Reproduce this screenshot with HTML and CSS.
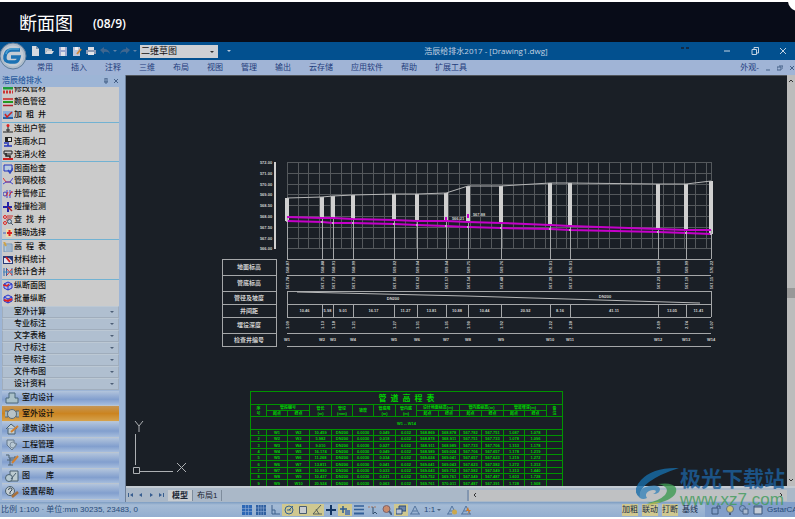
FILE: index.html
```
<!DOCTYPE html>
<html lang="zh-CN">
<head>

	<!-- Page title -->
	<title>断面图</title>

	<!-- Meta tags -->
	<meta charset="UTF-8">
	<meta name="viewport" content="width=device-width, initial-scale=1.0">

	<!-- Style -->
	<link rel="stylesheet" href="styles.css">

</head>
<body>

<!-- Caption -->
<header class="caption">
	<h1>断面图</h1>
	<span>(08/9)</span>
	<i class="corner"></i>
</header>

<main class="app">

	<!-- Title bar -->
	<div class="titlebar">
		<button class="logo" aria-label="菜单">
			<svg width="28" height="28" viewBox="0 0 28 28">
				<circle cx="14" cy="14" r="13" fill="#aebccb" stroke="#5f7d9b"/>
				<circle cx="14" cy="14" r="10.500" fill="#c3ccd5"/>
				<path d="M21 8h-8q-6 0-7 6t5 6h5q3 0 4-5h-8" fill="none" stroke="#1b72b4" stroke-width="3.500"/>
				<path d="M20 7h-7q-5 0-6 5" fill="none" stroke="#4aa0d4" stroke-width="1.500"/>
			</svg>
		</button>
		<div class="quick">
			<button aria-label="新建"><svg viewBox="0 0 10 10"><path d="M2 0h4l3 3v7H2z" fill="#d5dae0"/><path d="M6 0v3h3" fill="#8899ad"/></svg></button>
			<button aria-label="打开"><svg viewBox="0 0 10 10"><path d="M1 2h3l1 1h3v2H3L1 8z" fill="#b8bfc8"/><path d="M3 5h7L8 8H1z" fill="#d5d9de"/></svg></button>
			<button aria-label="保存"><svg viewBox="0 0 10 10"><path d="M1 1h8v9H1z" fill="#9ea9d1"/><path d="M3 1h4v3H3zM3 6h4v4H3z" fill="#e0e2e8"/></svg></button>
			<button aria-label="另存为"><svg viewBox="0 0 10 10"><path d="M1 1h7v9H1z" fill="#bcc5dc"/><path d="M3 1h3v3H3z" fill="#eee"/><path d="M9 3L5 8" stroke="#d08a3c" stroke-width="2"/></svg></button>
			<button aria-label="打印"><svg viewBox="0 0 10 10"><path d="M2 1h6v3H2z" fill="#d8dce2"/><path d="M0 4h10v4H0z" fill="#8e9bb5"/><path d="M2 6h6v3H2z" fill="#e3e5ea"/></svg></button>
			<button aria-label="放弃"><svg viewBox="0 0 10 10"><path d="M0 4l4-3v2q5 0 6 5-2-3-6-2v2z" fill="#3f668f"/></svg></button>
			<i class="caret"></i>
			<button aria-label="重做"><svg viewBox="0 0 10 10"><path d="M10 4L6 1v2q-5 0-6 5 2-3 6-2v2z" fill="#3f668f"/></svg></button>
			<i class="caret"></i>
		</div>
		<div class="workspace">
			<select aria-label="工作空间"><option>二维草图</option></select>
		</div>
		<i class="caret light"></i>
		<h2>浩辰给排水2017 - [Drawing1.dwg]</h2>
		<div class="window">
			<svg class="dots" viewBox="0 0 8 4"><path d="M0 2h3M5 2h3"/></svg>
			<button aria-label="最小化"><svg viewBox="0 0 8 8"><path d="M1 4h6"/></svg></button>
			<button aria-label="还原"><svg viewBox="0 0 8 8"><path d="M1 2.500h4.500v5H1zM3 2V.5h4.500V6H6"/></svg></button>
			<button aria-label="关闭"><svg viewBox="0 0 8 8"><path d="M1 1l6 6M7 1L1 7"/></svg></button>
		</div>
	</div>

	<!-- Menu -->
	<nav class="menu">
		<a href="#">常用</a>
		<a href="#">插入</a>
		<a href="#">注释</a>
		<a href="#">三维</a>
		<a href="#">布局</a>
		<a href="#">视图</a>
		<a href="#">管理</a>
		<a href="#">输出</a>
		<a href="#">云存储</a>
		<a href="#">应用软件</a>
		<a href="#">帮助</a>
		<a href="#">扩展工具</a>
		<div class="child">
			<a href="#">外观-</a>
			<button aria-label="最小化"><svg viewBox="0 0 6 6"><path d="M1 5h4"/></svg></button>
			<button aria-label="还原"><svg viewBox="0 0 6 6"><path d="M0 2h4v3H0zM2 1h4v3"/></svg></button>
			<button aria-label="关闭"><svg viewBox="0 0 6 6"><path d="M1 1l4 4M5 1L1 5"/></svg></button>
		</div>
	</nav>

	<div class="work">

		<!-- Tool panel -->
		<aside class="panel">
			<div class="panel-title">
				<span>浩辰给排水</span>
				<button aria-label="固定"><svg viewBox="0 0 6 6"><path d="M2 0v4M4 0v4M1 4h4M3 4v2M2 0h2"/></svg></button>
				<button aria-label="关闭"><svg viewBox="0 0 6 6"><path d="M1 1l4 4M5 1L1 5"/></svg></button>
			</div>

			<div class="tools">
				<button class="cut"><svg viewBox="0 0 10 10"><path d="M0 4h10" stroke="#1d9b3a" stroke-width="3"/><path d="M0 8h10" stroke="#c33" stroke-width="3" stroke-dasharray="2 1"/></svg>修改管材</button>
				<button><svg viewBox="0 0 10 10"><path d="M0 2h10" stroke="#c22" stroke-width="1.500"/><path d="M0 5h10" stroke="#292" stroke-width="2"/><path d="M0 8.500h10" stroke="#b02030" stroke-width="1.500"/></svg>颜色管径</button>
				<button><svg viewBox="0 0 10 10"><path d="M0 1h10v8H0z" fill="#8cafd8"/><path d="M0 8h10" stroke="#2963a8" stroke-width="2"/><path d="M2 4l2 3 5-5" fill="none" stroke="#c22" stroke-width="1.500"/></svg>加&ensp;粗&ensp;井</button>
				<hr>
				<button><svg viewBox="0 0 10 10"><path d="M0 8h10M5 8V2M3 6h4" fill="none" stroke="#222"/><circle cx="5" cy="1.500" r="1.500" fill="#d22"/></svg>连出户管</button>
				<button><svg viewBox="0 0 10 10"><path d="M2 0h7v5H2z" fill="#222"/><path d="M5 1h3v3H5z" fill="#ddd"/><path d="M5 5v4M1 9h8M1 6h3" stroke="#23b" stroke-width="1.500"/></svg>连雨水口</button>
				<button><svg viewBox="0 0 10 10"><path d="M1 1h8v3H1z" fill="none" stroke="#222"/><path d="M3 3v3h4v2" fill="none" stroke="#222" stroke-width="1.500"/><path d="M0 9h10" stroke="#c22" stroke-width="2"/></svg>连消火栓</button>
				<hr>
				<button><svg viewBox="0 0 10 10"><path d="M1 1h8v6H1z" fill="#b8cae0" stroke="#23b"/><path d="M5 6l2 3 3-5" fill="none" stroke="#3348c0" stroke-width="1.500"/></svg>图面检查</button>
				<button><svg viewBox="0 0 10 10"><path d="M0 2l3 4h4" fill="none" stroke="#d33"/><path d="M0 8l3-2h4l3-4M7 6l3 2" fill="none" stroke="#44c"/></svg>管网校核</button>
				<button><svg viewBox="0 0 10 10"><circle cx="2" cy="5" r="2" fill="none" stroke="#44b"/><path d="M4 1v8M7 1v8M7 4l3-1" stroke="#44c"/><path d="M5 3l-2 4M9 2L6 7" stroke="#d33"/></svg>井管修正</button>
				<button><svg viewBox="0 0 10 10"><path d="M0 5h9M5 0v10" stroke="#22a" stroke-width="2"/><path d="M5 5l4 4" stroke="#a22" stroke-width="1.500"/></svg>碰撞检测</button>
				<button><svg viewBox="0 0 10 10"><circle cx="2" cy="2" r="1.500" fill="none" stroke="#d22"/><circle cx="2" cy="8" r="1.500" fill="none" stroke="#d22"/><path d="M4 1h6M4 3h5M3 5h4" stroke="#c33"/><circle cx="6.500" cy="6.500" r="2" fill="#bcd" stroke="#456"/><path d="M8 8l2 2" stroke="#456"/></svg>查&ensp;找&ensp;井</button>
				<button><svg viewBox="0 0 10 10"><path d="M3 1h6v8H3z" fill="#eadba9"/><path d="M4 5h5M6.500 2v6" stroke="#d22" stroke-width="2"/><path d="M0 5h3" stroke="#46b"/></svg>辅助选择</button>
				<hr>
				<button><svg viewBox="0 0 10 10"><path d="M1 2h8v8H1z" fill="#b5cadc" stroke="#7393b4"/><path d="M3 4h5M3 6h5M3 8h5" stroke="#8aa2bd"/><path d="M1 0l2 4" stroke="#cda34b" stroke-width="2"/></svg>高&ensp;程&ensp;表</button>
				<button><svg viewBox="0 0 10 10"><path d="M0 1h10v8H0z" fill="#273a78"/><path d="M1 3h5l3 3v2H1z" fill="#e3e3ef"/><path d="M3 2l4 5" stroke="#c22" stroke-width="2"/></svg>材料统计</button>
				<button><svg viewBox="0 0 10 10"><path d="M1 1v8M3.500 1v8M9 1v8" stroke="#36a"/><path d="M4 2l5 6M9 2L4 8" stroke="#d33"/><path d="M0 5h10" stroke="#48b"/></svg>统计合并</button>
				<hr>
				<button><svg viewBox="0 0 10 10"><path d="M1 3l4-2 4 2v4L5 9 1 7zM1 3l4 2 4-2M5 5v4" fill="#b7b7e6" stroke="#23c"/><path d="M0 4l4 1 2-2" fill="none" stroke="#d22" stroke-width="1.500"/></svg>纵断面图</button>
				<button><svg viewBox="0 0 10 10"><path d="M1 3l4-2 4 2v4L5 9 1 7zM1 3l4 2 4-2M5 5v4" fill="#b7b7e6" stroke="#23c"/><path d="M1 6l4 1 4-2" fill="none" stroke="#d22" stroke-width="2"/></svg>批量纵断</button>
			</div>

			<div class="groups">
				<button>室外计算<i class="caret"></i></button>
				<button>专业标注<i class="caret"></i></button>
				<button>文字表格<i class="caret"></i></button>
				<button>尺寸标注<i class="caret"></i></button>
				<button>符号标注<i class="caret"></i></button>
				<button>文件布图<i class="caret"></i></button>
				<button>设计资料<i class="caret"></i></button>
			</div>

			<div class="modules">
				<button><svg viewBox="0 0 14 12"><path d="M4 1h6v5h3v5H1V6h3z" fill="#a9c0c8" stroke="#4a6678"/></svg>室内设计</button>
				<button class="active"><svg viewBox="0 0 14 12"><path d="M0 3h3v6H0M14 3h-3v6h3" fill="#9fb0b4" stroke="#5a6b78"/><circle cx="7" cy="6" r="4.500" fill="#b8c3c6" stroke="#5a6b78"/></svg>室外设计</button>
				<button><svg viewBox="0 0 14 12"><path d="M1 6l5-5 6 5M3 5v6h7V5" fill="#c2cccf" stroke="#4a6070"/><path d="M6 9l7-6" stroke="#d08030" stroke-width="2"/></svg>建筑设计</button>
				<button><svg viewBox="0 0 14 12"><path d="M2 1h7v3l3 1-5 6-5-5z" fill="#b8c8d4" stroke="#64788c"/><circle cx="8" cy="6" r="3" fill="none" stroke="#8090a0"/></svg>工程管理</button>
				<button><svg viewBox="0 0 14 12"><path d="M1 1h3v3h6V2M2 6h8M5 4v7M3 11h5" fill="none" stroke="#4f6370"/><path d="M7 9l6-7" stroke="#d08030" stroke-width="2"/></svg>通用工具</button>
				<button><svg viewBox="0 0 14 12"><path d="M5 1h8v10H5z" fill="#bccbd0" stroke="#4a6070"/><circle cx="4" cy="8" r="3.500" fill="#b6c9d2" stroke="#4a6070"/><path d="M6 9l5-6" stroke="#4a6070"/></svg>图&emsp;&emsp;库</button>
				<button><svg viewBox="0 0 14 12"><circle cx="5" cy="5" r="4.500" fill="#c5ced2" stroke="#4a6070"/><path d="M3.500 4q0-2 2-2t1.500 2L5 6v2" fill="none" stroke="#384858"/><path d="M7 11l6-5" stroke="#a86f38" stroke-width="2.500"/></svg>设置帮助</button>
			</div>
		</aside>

		<section class="view">

			<!-- Drawing -->
			<div class="canvas">
				<svg id="profile" width="504" height="196" viewBox="216 156 504 196"></svg>

				<table class="elevations">
					<colgroup>
						<col class="narrow"><col class="mid"><col><col><col class="mid"><col class="mid"><col><col class="mid">
						<col><col class="mid"><col><col><col class="mid"><col><col class="narrow">
					</colgroup>
					<thead>
						<tr class="title"><th colspan="15">管&ensp;道&ensp;高&ensp;程&ensp;表</th></tr>
						<tr>
							<th rowspan="2">序<br>号</th>
							<th colspan="2">管段编号</th>
							<th rowspan="2">管长<br>(m)</th>
							<th rowspan="2">管径<br>(mm)</th>
							<th rowspan="2">坡度</th>
							<th rowspan="2">管底降<br>(m)</th>
							<th rowspan="2">管内底<br>(m)</th>
							<th colspan="2">设计地面标高(m)</th>
							<th colspan="2">管内底标高(m)</th>
							<th colspan="2">管道埋深(m)</th>
							<th rowspan="2">备<br>注</th>
						</tr>
						<tr>
							<th>起点</th><th>终点</th><th>起点</th><th>终点</th><th>起点</th><th>终点</th><th>起点</th><th>终点</th>
						</tr>
						<tr class="range"><td colspan="15">W1 -- W14</td></tr>
					</thead>
					<tbody id="rows"></tbody>
				</table>

				<svg class="ucs" width="56" height="58" viewBox="0 0 56 58">
					<path d="M3.500 45V14M7 51.500h34M1.500 47.500h6v6h-6z"/>
					<path d="M3 1l4 5 4-5M7 6v6M45 43l9 9M54 43l-9 9"/>
				</svg>
			</div>

			<!-- Vertical scroll -->
			<div class="vscroll">
				<button aria-label="向上"><svg viewBox="0 0 6 6"><path d="M1 4l2-2 2 2"/></svg></button>
				<i></i>
				<button aria-label="向下"><svg viewBox="0 0 6 6"><path d="M1 2l2 2 2-2"/></svg></button>
			</div>

			<!-- Layout tabs -->
			<div class="tabs">
				<button class="step" aria-label="第一个"><svg viewBox="0 0 6 6"><path d="M0 1h1v4H0zM5 1v4L2 3z"/></svg></button>
				<button class="step" aria-label="上一个"><svg viewBox="0 0 6 6"><path d="M4 1v4L1 3z"/></svg></button>
				<button class="step" aria-label="下一个"><svg viewBox="0 0 6 6"><path d="M2 1v4l3-2z"/></svg></button>
				<button class="step" aria-label="最后一个"><svg viewBox="0 0 6 6"><path d="M1 1v4l3-2zM5 1h1v4H5z"/></svg></button>
				<button class="tab active">模型</button>
				<button class="tab">布局1</button>
				<div class="hscroll">
					<button aria-label="向左"><svg viewBox="0 0 6 6"><path d="M4 1L2 3l2 2"/></svg></button>
					<button aria-label="向右"><svg viewBox="0 0 6 6"><path d="M2 1l2 2-2 2"/></svg></button>
				</div>
			</div>
		</section>
	</div>

	<!-- Status bar -->
	<footer class="status">
		<div class="coords">比例 1:100 · 单位:mm 30235, 23483, 0</div>
		<div class="modes">
			<button aria-label="捕捉"><svg viewBox="0 0 10 10"><path d="M0 0h10v10H0z" fill="#2d67b5"/><path d="M3.500 0v10M6.500 0v10M0 3.500h10M0 6.500h10" stroke="#8caad4" stroke-width=".6"/></svg></button>
			<button aria-label="栅格"><svg viewBox="0 0 10 10"><path d="M0 0h10v10H0z" fill="#2f5f9f"/><path d="M2.500 0v10M5 0v10M7.500 0v10M0 3h10M0 6.500h10" stroke="#8caad4" stroke-width=".6"/></svg></button>
			<button aria-label="正交"><svg viewBox="0 0 10 10"><path d="M2 0v9h8M2 5h3v4" fill="none" stroke="#3f618c"/></svg></button>
			<button class="on" aria-label="极轴"><svg viewBox="0 0 10 10"><circle cx="5" cy="5" r="4" fill="none" stroke="#35618f"/><path d="M5 5l4-4M3 5h4" stroke="#35618f"/></svg></button>
			<button class="on" aria-label="对象捕捉"><svg viewBox="0 0 10 10"><path d="M1.500 1.500h7v7h-7z" fill="#c8ccd0" stroke="#4a5c70"/></svg></button>
			<button class="on" aria-label="追踪"><svg viewBox="0 0 10 10"><path d="M9 0L1 9h9M4 4l3 5" fill="none" stroke="#57605a"/></svg></button>
			<button aria-label="动态"><svg viewBox="0 0 10 10"><path d="M0 5h10M5 0v10" stroke="#123462" stroke-width="2"/></svg></button>
			<button class="on" aria-label="输入"><svg viewBox="0 0 10 10"><path d="M0 4h7M3 1v7" stroke="#2d5b92" stroke-width="1.500"/><path d="M5 5h5v5H5z" fill="#6280aa"/></svg></button>
			<button aria-label="线宽"><svg viewBox="0 0 10 10"><path d="M0 1h10M0 4.500h10" stroke="#335f98" stroke-width="1.500"/><path d="M0 8.500h10" stroke="#335f98" stroke-width="2"/></svg></button>
			<button aria-label="选择"><svg viewBox="0 0 10 10"><path d="M0 2h8" stroke="#a67865" stroke-dasharray="2 1"/><path d="M5 2v7l2-2 2 2" fill="none" stroke="#34506f"/></svg></button>
			<button aria-label="缩放"><svg viewBox="0 0 10 10"><circle cx="4.500" cy="4" r="3.500" fill="#c98a6c" stroke="#7f6268"/><path d="M7 6l3 4" stroke="#49617e" stroke-width="2"/></svg></button>
			<button class="on" aria-label="图层"><svg viewBox="0 0 10 10"><path d="M3 1h7v5H3z" fill="#6d86a9" stroke="#2c4a78"/><path d="M0 4h6v5H0z" fill="#b9c4d4" stroke="#2c4a78"/></svg></button>
			<button aria-label="注释比例"><svg viewBox="0 0 10 10"><path d="M1 9l4-8 4 8M0 9h10M3 6h4" fill="none" stroke="#54759e"/></svg></button>
			<button class="scale">1:1<i class="caret"></i></button>
			<button aria-label="注释可见性"><svg viewBox="0 0 10 10"><path d="M1 9l4-8 4 8M0 9h5M3 6h3" fill="none" stroke="#54759e"/><circle cx="7.500" cy="7" r="2.500" fill="#cba84d"/></svg></button>
			<button aria-label="自动缩放"><svg viewBox="0 0 10 10"><path d="M1 9l4-8 4 8M0 9h10M3 6h3" fill="none" stroke="#54759e"/><path d="M7 2L5 6h3l-2 4 4-5H8z" fill="#d27a25"/></svg></button>
		</div>
		<div class="flags">
			<button class="on">加粗</button>
			<button class="on">联动</button>
			<button class="on">打断</button>
			<button>基线</button>
		</div>
		<div class="tray">
			<button aria-label="锁定"><svg viewBox="0 0 10 10"><path d="M1 3h6v6H1zM6 3V1h3v3" fill="none" stroke="#3c587d"/></svg></button>
			<button aria-label="提示"><svg viewBox="0 0 10 10"><circle cx="5" cy="4" r="3.500" fill="#d0c475" stroke="#5d728c"/><path d="M4 8h2v2H4z" fill="#455b78"/></svg></button>
			<button aria-label="隔离"><svg viewBox="0 0 10 10"><circle cx="3.500" cy="3.500" r="3" fill="none" stroke="#4a6488"/><path d="M4 4h5v5H4z" fill="#a9b9cf" stroke="#4a6488"/></svg></button>
			<button aria-label="全屏"><svg viewBox="0 0 10 10"><path d="M1 1h8v8H1z" fill="#c4ccd6" stroke="#3c587d"/><path d="M1 2h8" stroke="#3c587d"/></svg></button>
			<span>GstarCAD</span>
		</div>
	</footer>

	<!-- Site mark -->
	<div class="mark">
		<svg width="44" height="40" viewBox="0 0 44 40">
			<path d="M43 1Q17 0 5 13-5 24 4 31q-1-9 9-16Q24 7 43 1z" fill="#176da9"/>
			<path d="M4 31Q2 21 13 19q10-2 11 3 0 5-7 5 3-1 3-3-2-2-7 0-5 3-2 7-4 2-7 0z" fill="#3a86bb"/>
			<path d="M22 17q15-2 18 4 2 8-11 13-9 4-18 2 12-2 18-8 6-8-7-11z" fill="#3f9b53"/>
			<path d="M10 38q9-4 15-3l-6 2z" fill="#a9b53c"/>
		</svg>
		<div>
			<strong>极光下载站</strong>
			<span>www.xz7.com</span>
		</div>
	</div>
</main>

<script src="script.js"></script>
</body>
</html>
```

FILE: styles.css
```
* {
	box-sizing: border-box;
}

html,
body {
	height: 100%;
	margin: 0;
}

body {
	background: #fff;
	display: flex;
	flex-direction: column;
	padding: 2px 0;
	font-family: 'Liberation Sans', 'Noto Sans CJK SC', sans-serif;
	font-size: 8px;
	line-height: 12px;
	overflow: hidden;
}

button {
	background: transparent;
	border: none;
	margin: 0;
	padding: 0;
	color: inherit;
	font: inherit;
	cursor: pointer;
}

a {
	color: inherit;
	text-decoration: none;
}

svg {
	display: block;
	flex: none;
}

.caret {
	border: 2px solid transparent;
	border-top-color: #4d5f76;
	border-bottom: none;
	width: 4px;
	height: 2px;
}

/* Caption */

.caption {
	background: #080c18;
	color: #fff;
	display: flex;
	align-items: center;
	gap: 20px;
	height: 40px;
	flex: none;
	padding: 2px 19px 0;
	position: relative;
	overflow: hidden;
	font-family: 'Open Sans', 'Noto Sans CJK SC', sans-serif;
	font-size: 12px;
}

.caption h1 {
	font-size: 18px;
	font-weight: 400;
	line-height: 24px;
	margin: 0;
}

.caption span {
	font-weight: 600;
	padding-top: 2px;
}

.corner {
	background: #fff;
	border-radius: 50%;
	width: 20px;
	height: 20px;
	position: absolute;
	top: -11px;
	right: -13px;
}

/* Window */

.app {
	display: flex;
	flex-direction: column;
	flex: 1;
	min-height: 0;
	position: relative;
	overflow: hidden;
}

.titlebar {
	background: #02508f;
	display: flex;
	align-items: center;
	height: 18px;
	flex: none;
	padding-left: 30px;
	color: #c3d3e3;
}

.logo {
	position: absolute;
	top: 0;
	left: -1px;
	z-index: 1;
}

.quick {
	display: flex;
	align-items: center;
	gap: 4px;
}

.quick svg {
	width: 10px;
	height: 10px;
}

.quick .caret {
	border-top-color: #5d82a8;
	margin: 0 -1px;
}

.workspace {
	position: relative;
	margin: 0 9px 0 4px;
}

.workspace::after {
	content: '';
	border: 2px solid transparent;
	border-top-color: #333;
	border-bottom: none;
	position: absolute;
	top: 6px;
	right: 4px;
}

.workspace select {
	appearance: none;
	background: #cdd0d4;
	border: none;
	border-radius: 0;
	color: #111;
	width: 78px;
	height: 13px;
	padding: 0 1px;
	font: 9px/13px 'Liberation Sans', 'Noto Sans CJK SC', sans-serif;
	display: block;
}

.caret.light {
	border-top-color: #b4c6d9;
}

.titlebar h2 {
	flex: 1;
	margin: 0;
	padding-left: 60px;
	text-align: center;
	font: 8px/12px 'Open Sans', 'Noto Sans CJK SC', sans-serif;
	white-space: nowrap;
}

.window {
	display: flex;
	align-items: center;
	gap: 20px;
	padding-right: 8px;
}

.window svg {
	width: 8px;
	height: 8px;
	fill: none;
	stroke: #c3d3e3;
}

.window .dots {
	height: 4px;
	margin: -6px 14px 0 0;
	stroke: #122b47;
	stroke-width: 2;
}

.menu {
	background: #a0b4d6;
	color: #1f3c7c;
	display: flex;
	align-items: center;
	gap: 18px;
	height: 15px;
	flex: none;
	padding-left: 37px;
	white-space: nowrap;
}

.child {
	display: flex;
	align-items: center;
	gap: 6px;
	margin-left: auto;
}

.child svg,
.panel-title svg {
	width: 6px;
	height: 6px;
	fill: none;
	stroke: #456087;
}

.work {
	display: flex;
	flex: 1;
	min-height: 0;
}

/* Tool panel */

.panel {
	background: #9db5d6;
	border-right: 1px solid #6c7f99;
	color: #111;
	display: flex;
	flex-direction: column;
	width: 126px;
	flex: none;
	padding: 0 6px 2px 2px;
	font-weight: 500;
}

.panel-title {
	color: #2c5c9e;
	display: flex;
	align-items: center;
	gap: 4px;
	height: 12px;
	flex: none;
}

.panel-title span {
	flex: 1;
}

.tools,
.modules {
	display: flex;
	flex-direction: column;
	flex: 1 1 0;
	min-height: 0;
	overflow: hidden;
}

.tools {
	background: #cbcbcb;
	flex-grow: 2;
}

.tools button,
.modules button {
	display: flex;
	align-items: center;
	gap: 1px;
	flex: 1 1 0;
	min-height: 0;
	padding-left: 1px;
}

.tools .cut {
	margin-top: -4px;
}

.tools svg {
	width: 10px;
	height: 10px;
}

.tools hr {
	background: #72b2d2;
	border: none;
	width: 100%;
	height: 1px;
	margin: 0;
}

.groups {
	display: flex;
	flex-direction: column;
	flex: none;
	margin-bottom: 1px;
}

.groups button {
	background: #b0bfd0;
	border: 1px solid #a0adbc;
	border-top-color: #bcc8d4;
	display: flex;
	align-items: center;
	justify-content: space-between;
	height: 12px;
	padding: 0 4px 0 11px;
	line-height: 10px;
}

.modules button {
	background: linear-gradient(#b2c4dc, #829fce 60%, #a6bddd);
	border-bottom: 1px solid #bac5d1;
	gap: 3px;
	padding-left: 3px;
}

.modules .active {
	background: linear-gradient(#c59655, #cb8420 50%, #d5a24d);
}

.modules svg {
	width: 14px;
	height: 12px;
}

/* Drawing */

.view {
	display: grid;
	grid-template: minmax(0, 1fr) 16px / minmax(0, 1fr) 8px;
	flex: 1;
	min-width: 0;
}

.canvas {
	background: #1a1f26;
	border-top: 1px solid #50555b;
	padding: 80px 0 0 90px;
	position: relative;
	overflow: hidden;
}

#profile {
	font-size: 4px;
	font-weight: 700;
	fill: #d0d0d0;
	text-anchor: middle;
}

#profile .grid {
	fill: none;
	stroke: #54585c;
	shape-rendering: crispEdges;
}

#profile .line {
	fill: none;
	stroke: #a5a7a9;
	shape-rendering: crispEdges;
}

#profile .ground {
	fill: none;
	stroke: #b5b6b7;
}

#profile .pipe {
	fill: none;
	stroke: #c500c9;
	stroke-width: 2;
}

#profile .label {
	font-size: 6px;
}

#profile .tick {
	fill: #c500c9;
}

.elevations {
	border-collapse: collapse;
	table-layout: fixed;
	width: 312px;
	margin: 39px 0 0 34px;
	color: #00d400;
	font-size: 4px;
	font-weight: 700;
	line-height: 5px;
	text-align: center;
	white-space: nowrap;
}

.elevations col {
	width: 22px;
}

.elevations .mid {
	width: 21px;
}

.elevations .narrow {
	width: 16px;
}

.elevations th,
.elevations td {
	border: 1px solid #009400;
	height: 6px;
	padding: 0;
}

.elevations .title th {
	height: 13px;
	font-size: 8px;
}

.elevations .range td {
	height: 13px;
}

.elevations tbody tr:nth-child(3n) td {
	height: 7px;
}

.ucs {
	position: absolute;
	left: 6px;
	bottom: 8px;
	fill: none;
	stroke: #adb0b3;
}

.vscroll {
	background: #bcbcbc;
	display: flex;
	flex-direction: column;
	align-items: center;
	justify-content: space-between;
	padding: 3px 0;
}

.vscroll i {
	background: #989898;
	width: 8px;
	height: 10px;
	margin-top: 24px;
}

.vscroll svg,
.hscroll svg {
	width: 6px;
	height: 6px;
	fill: none;
	stroke: #333;
}

.tabs {
	background: #aab8c8;
	border-top: 2px solid #c3cad2;
	display: flex;
	align-items: center;
	grid-column: 1 / 3;
	padding-left: 2px;
	color: #1b2532;
}

.step {
	width: 10px;
}

.step svg {
	width: 6px;
	height: 6px;
	fill: #365d8f;
}

.tab {
	border-right: 1px solid #7e8c9c;
	height: 11px;
	padding: 0 4px;
	line-height: 11px;
}

.tab.active {
	background: #c7ccd1;
	font-weight: 700;
}

.hscroll {
	background: #bfc1c3;
	border-left: 2px solid #8296b0;
	display: flex;
	align-items: center;
	justify-content: space-between;
	width: 48%;
	height: 11px;
	margin: 0 8px 0 auto;
	padding: 0 3px;
}

/* Status bar */

.status {
	background: linear-gradient(#7d9dc2, #a5bbd5 20%, #93aed0);
	color: #284a78;
	display: flex;
	align-items: center;
	height: 15px;
	flex: none;
	white-space: nowrap;
}

.coords {
	width: 240px;
	padding-left: 1px;
}

.modes,
.flags,
.tray {
	display: flex;
	align-items: center;
}

.modes button {
	padding: 1px 2px;
}

.modes .scale {
	display: flex;
	align-items: center;
	gap: 2px;
	padding-right: 4px;
}

.modes svg,
.tray svg {
	width: 10px;
	height: 10px;
}

.modes .on,
.flags .on {
	background: #cfc890;
}

.flags {
	gap: 4px;
	margin-left: auto;
	color: #182b48;
}

.tray {
	background: #829fc9;
	gap: 4px;
	width: 90px;
	height: 15px;
	margin-left: 7px;
	padding-left: 6px;
	overflow: hidden;
}

/* Site mark */

.mark {
	display: flex;
	position: absolute;
	right: 10px;
	bottom: 8px;
	opacity: .8;
	pointer-events: none;
}

.mark strong,
.mark span {
	display: block;
	color: #1d609d;
	font-size: 21px;
	line-height: 24px;
}

.mark span {
	color: #3f9b5a;
	font-size: 17px;
	line-height: 18px;
}
```

FILE: script.js
```
const svg = document.getElementById("profile");
const rows = document.getElementById("rows");

// x, ground y, crown y, invert y, distance to the next well, levels
const wells = [
	[287, 198, 217, 221, "10.46", "568.87", "567.78", "1.09"],
	[322, 197, 218, 222, "5.98", "568.88", "567.75", "1.13"],
	[333, 196, 218, 223, "9.01", "568.91", "567.73", "1.18"],
	[353, 195, 219, 223, "16.17", "568.99", "567.70", "1.21"],
	[394, 194, 220, 224, "11.27", "569.02", "567.66", "1.27"],
	[417, 194, 221, 225, "13.81", "569.04", "567.62", "1.31"],
	[446, 193, 221, 226, "10.88", "569.04", "567.57", "1.35"],
	[468, 186, 222, 227, "10.44", "569.75", "567.54", "1.90"],
	[501, 186, 223, 228, "20.92", "569.76", "567.48", "1.92"],
	[550, 183, 225, 229, "8.16", "570.01", "567.39", "2.22"],
	[570, 183, 226, 230, "41.11", "570.01", "567.37", "2.28"],
	[658, 184, 229, 232, "13.05", "569.99", "567.23", "2.69"],
	[686, 184, 230, 233, "11.41", "569.99", "567.19", "2.74"],
	[711, 181, 230, 234, "", "570.22", "567.15", "3.07"]
];

const levels = ["572.00", "571.00", "570.00", "569.00", "568.50", "568.00", "567.50", "567.00", "566.00"];

// label and bottom line of each band
const bands = [
	["地面标高", 275],
	["管底标高", 291],
	["管径及坡度", 304],
	["井间距", 317],
	["埋设深度", 333],
	["检查井编号", 346]
];

function text(x, y, value, cls) {
	return `<text class="${cls || ""}" x="${x}" y="${y}">${value}</text>`;
}

function turned(x, y, value) {
	return `<text x="${x}" y="${y}" transform="rotate(-90 ${x} ${y})">${value}</text>`;
}

function drawProfile() {
	let out = "";
	let grid = "";
	let lines = "M222.5 259.5H276.5V346.5H222.5ZM287 259.5H711M287.5 291V317M711.5 291V317";

	// Grid
	for (let i = 0; i < 9; i++) {
		let y = Math.round(162 + i * 10.8);
		grid += `M287 ${y}.5H711`;
		out += text(266, y + 2, levels[i]);
	}
	for (let i = 0; i < 40; i++) {
		grid += `M${Math.round(287 + i * 10.74)}.5 162V249`;
	}
	grid += "M711.5 162V249";
	out += `<path class="grid" d="${grid}"/><rect x="274" y="162" width="2" height="87"/>`;

	// Bands
	let top = 259;
	for (const [name, bottom] of bands) {
		lines += `M222 ${bottom}.5H276M287 ${bottom}.5H711`;
		out += text(249, (top + bottom) / 2 + 2, name, "label");
		top = bottom;
	}

	// Wells
	wells.forEach(([x, ground, crown, invert, gap, level, bed, depth], i) => {
		lines += `M${x}.5 ${crown}V259M${x}.5 304V317`;
		out += `<rect x="${x - 2}" y="${ground}" width="4" height="${crown - ground + (i % 13 ? 0 : 4)}"/>`;
		out += turned(x + 2, 267, level) + turned(x + 2, 283, bed) + turned(x + 2, 325, depth);
		out += text(x, 341, "W" + (i + 1));
		if (gap) {
			out += text((x + wells[i + 1][0]) / 2, 312, gap);
		}
	});
	out += `<path class="line" d="${lines}"/>`;

	// Ground, pipe walls and slope
	out += `<path class="ground" d="M${wells.map(w => w[0] + " " + w[1]).join("L")}M297 292L466 296L700 303"/>`;
	out += `<path class="pipe" d="M${wells.map(w => w[0] + " " + w[2]).join("L")}M${wells.map(w => w[0] + " " + w[3]).join("L")}"/>`;
	out += wells.map(w => `<circle cx="${w[0]}" cy="${w[3]}" r="1"/>`).join("");
	out += text(393, 300, "DN200") + text(605, 298, "DN200");
	out += text(458, 220, "566.21") + text(479, 216, "567.88");
	out += `<rect class="tick" x="445" y="217" width="2" height="4"/><rect class="tick" x="467" y="214" width="2" height="4"/>`;

	svg.innerHTML = out;
}

const pipes = [
	["10.459", "0.0030", "0.049", "0.032", "568.869", "568.878", "567.782", "567.751", "1.087", "1.078"],
	["5.982", "0.0030", "0.018", "0.032", "568.878", "568.911", "567.751", "567.733", "1.078", "1.096"],
	["9.010", "0.0030", "0.027", "0.032", "568.911", "568.989", "567.733", "567.706", "1.153", "1.178"],
	["16.174", "0.0030", "0.049", "0.032", "568.989", "569.024", "567.706", "567.657", "1.178", "1.219"],
	["11.268", "0.0030", "0.034", "0.032", "569.024", "569.041", "567.657", "567.623", "1.219", "1.272"],
	["13.811", "0.0030", "0.041", "0.032", "569.041", "569.043", "567.623", "567.582", "1.272", "1.313"],
	["10.880", "0.0030", "0.033", "0.032", "569.043", "569.752", "567.582", "567.549", "1.313", "1.440"],
	["10.437", "0.0030", "0.031", "0.032", "569.752", "569.761", "567.549", "567.487", "1.603", "1.728"],
	["20.924", "0.0030", "0.063", "0.032", "569.761", "570.011", "567.487", "567.391", "1.728", "1.908"]
];

function fillRows() {
	rows.innerHTML = pipes.map((p, i) => {
		let cells = [i + 1, "W" + (i + 1), "W" + (i + 2), p[0], "DN200", ...p.slice(1), ""];
		return "<tr>" + cells.map(c => `<td>${c}</td>`).join("") + "</tr>";
	}).join("");
}

drawProfile();
fillRows();
```
